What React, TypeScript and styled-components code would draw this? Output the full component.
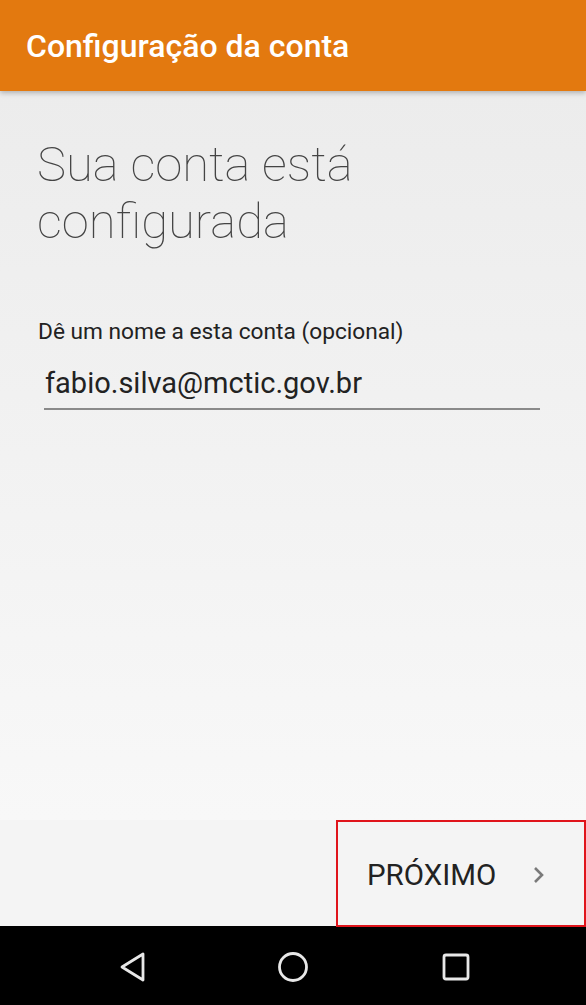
import React from "react";
import styled, { createGlobalStyle } from "styled-components";

const Global = createGlobalStyle`
  html, body { margin: 0; padding: 0; }
  body { font-family: Roboto, "Noto Sans", sans-serif; background: #000; }
  * { box-sizing: border-box; }
`;

const Screen = styled.div`
  width: 586px;
  height: 1005px;
  display: flex;
  flex-direction: column;
  overflow: hidden;
`;

const AppBar = styled.header`
  height: 91px;
  flex: none;
  background: #e3790f;
  display: flex;
  align-items: center;
  padding: 0 0 0 26px;
  position: relative;
  z-index: 1;
  box-shadow: 0 2px 5px rgba(0, 0, 0, 0.25);
`;

const AppTitle = styled.h1`
  margin: 0;
  color: #fff;
  font-family: Roboto, sans-serif;
  font-weight: 500;
  font-size: 32px;
`;

const Content = styled.main`
  flex: 1;
  background: linear-gradient(#ececec, #f8f8f8);
  padding: 45px 46px 0 37px;
  display: flex;
  flex-direction: column;
`;

const Heading = styled.h2`
  margin: 0;
  font-family: Roboto, sans-serif;
  font-weight: 100;
  font-size: 49px;
  line-height: 57px;
  color: #444;
`;

const FieldLabel = styled.label`
  margin-top: 68px;
  margin-left: 1px;
  font-family: Roboto, sans-serif;
  font-size: 22.7px;
  color: #222;
`;

const Field = styled.div`
  margin: 19px 0 0 7px;
  padding: 0 0 6px 1px;
  border-bottom: 2px solid #8a8a8a;
  font-family: Roboto, sans-serif;
  font-size: 29px;
  line-height: 38px;
  color: #222;
`;

const Footer = styled.footer`
  height: 106px;
  flex: none;
  background: #f4f4f4;
  display: flex;
  justify-content: flex-end;
`;

const NextButton = styled.button`
  width: 250px;
  height: 107px;
  margin-bottom: -1px;
  border: 2px solid #e0141b;
  background: transparent;
  display: flex;
  align-items: center;
  padding: 2px 0 0 29px;
  font-family: Roboto, sans-serif;
  font-size: 29.5px;
  color: #222;
  position: relative;
  z-index: 2;
  cursor: pointer;
`;

const Chevron = styled.svg`
  margin-left: 36px;
  flex: none;
`;

const NavBar = styled.nav`
  height: 79px;
  flex: none;
  background: #000;
  display: grid;
  grid-template-columns: 260px 66px 260px;
  align-items: center;
  justify-items: center;
`;

const NavIcon = styled.svg`
  display: block;
  margin-top: 2px;
`;

const NavCell = styled.div<{ $align: string; $pad: string }>`
  width: 100%;
  display: flex;
  justify-content: ${(p) => p.$align};
  padding: ${(p) => p.$pad};
`;

export default function App() {
  return (
    <Screen>
      <Global />
      <AppBar>
        <AppTitle>Configuração da conta</AppTitle>
      </AppBar>
      <Content>
        <Heading>
          Sua conta está
          <br />
          configurada
        </Heading>
        <FieldLabel>Dê um nome a esta conta (opcional)</FieldLabel>
        <Field>fabio.silva@mctic.gov.br</Field>
      </Content>
      <Footer>
        <NextButton>
          PRÓXIMO
          <Chevron width="14" height="20" viewBox="0 0 14 20">
            <path d="M3 3 L10 10 L3 17" fill="none" stroke="#7a7a7a" strokeWidth="2.6" />
          </Chevron>
        </NextButton>
      </Footer>
      <NavBar>
        <NavCell $align="flex-end" $pad="0 113px 0 0">
          <NavIcon width="28" height="32" viewBox="0 0 28 32">
            <path
              d="M24 3 L24 29 L3 16 Z"
              fill="none"
              stroke="#e8e8e8"
              strokeWidth="2.8"
              strokeLinejoin="round"
            />
          </NavIcon>
        </NavCell>
        <NavCell $align="center" $pad="0">
          <NavIcon width="32" height="32" viewBox="0 0 32 32">
            <circle cx="16" cy="16" r="13.5" fill="none" stroke="#e8e8e8" strokeWidth="2.8" />
          </NavIcon>
        </NavCell>
        <NavCell $align="flex-start" $pad="0 0 0 116px">
          <NavIcon width="28" height="28" viewBox="0 0 28 28">
            <rect x="2" y="2" width="24" height="24" rx="2" fill="none" stroke="#e8e8e8" strokeWidth="2.8" />
          </NavIcon>
        </NavCell>
      </NavBar>
    </Screen>
  );
}
